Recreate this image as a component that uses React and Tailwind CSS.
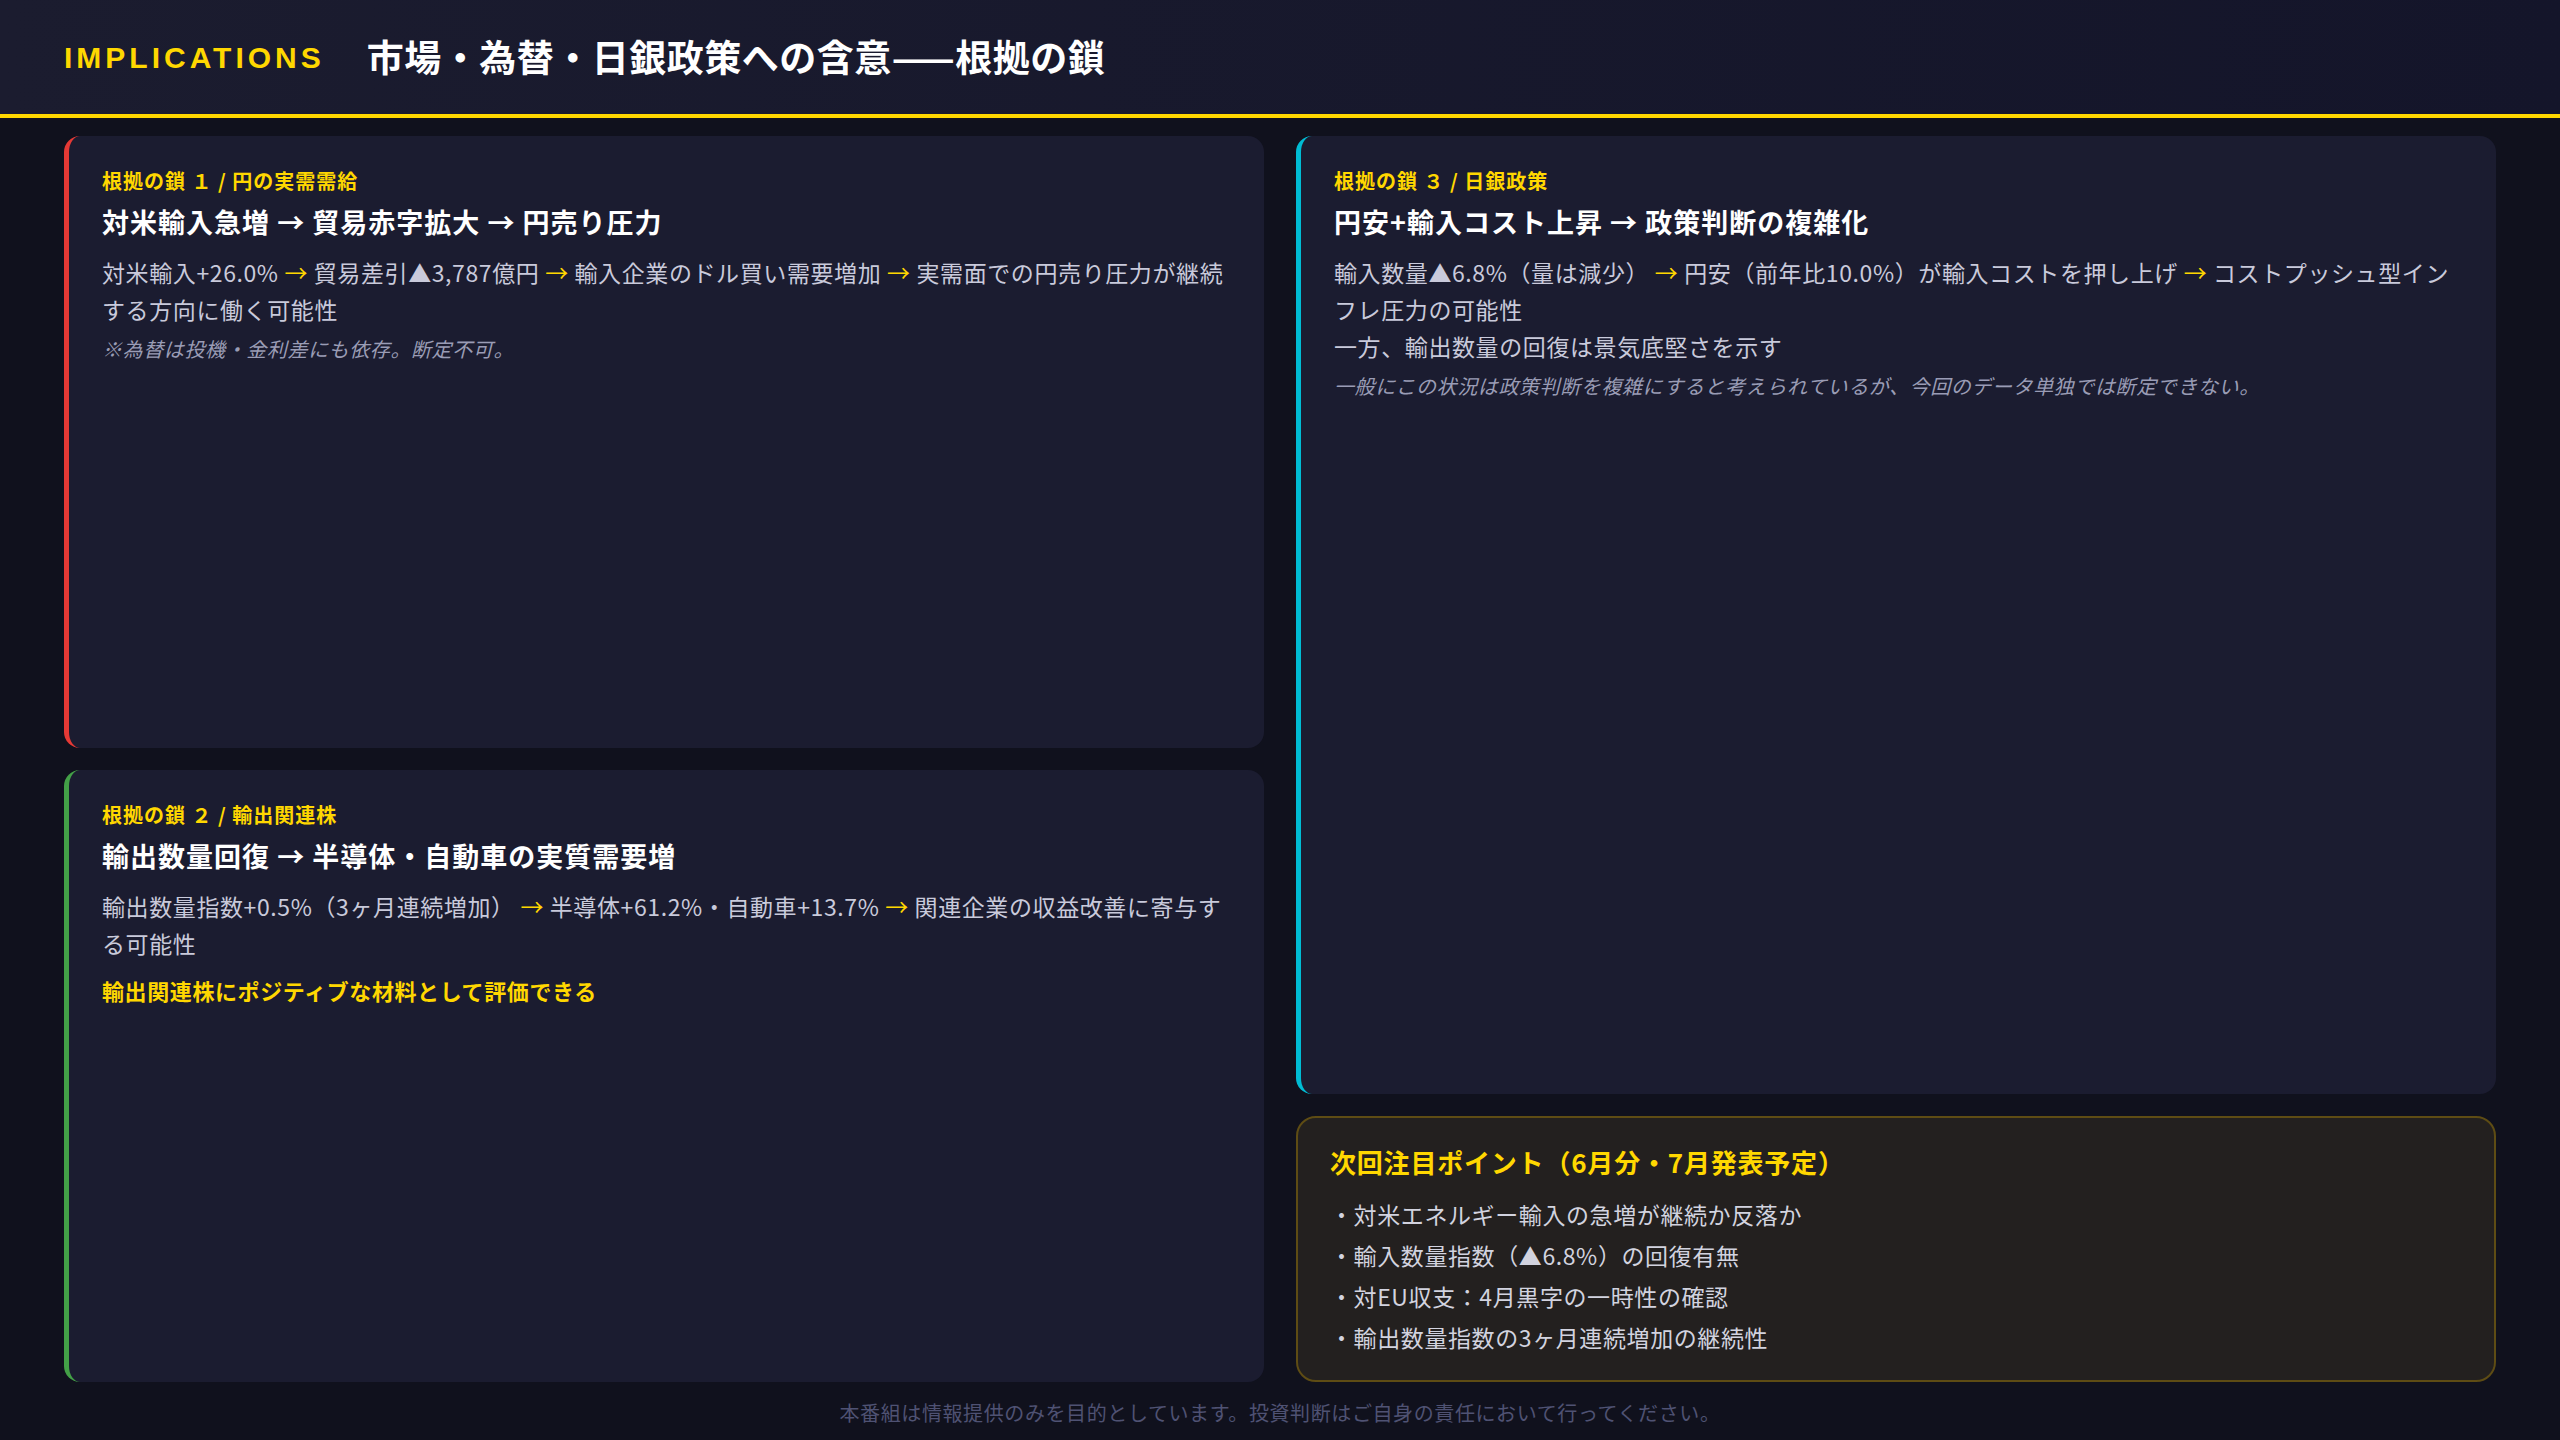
const font = { fontFamily: '"Noto Sans CJK JP", "Noto Sans", sans-serif' };

function Arrow() {
  return <span className="text-[#ffd700]"> → </span>;
}

function ChainCard({ accent, label, title, children, className = "" }) {
  return (
    <div className={`bg-[#1b1c30] rounded-2xl border-l-[5px] ${accent} pl-[33px] pr-8 pt-[28px] ${className}`}>
      <div className="text-[20px] font-bold text-[#ffd700] leading-[34px] tracking-[1px]">{label}</div>
      <div className="text-[27px] font-bold text-white leading-[40px] mt-[4px] tracking-[1px]">{title}</div>
      <div className="mt-[12px] text-[23px] leading-[37px] text-[#c9cadb] tracking-[0.6px]">{children}</div>
    </div>
  );
}

function Note({ children }) {
  return <div className="text-[20px] italic text-[#9a9cb5] leading-[34px] mt-[4px] tracking-[0.6px]">{children}</div>;
}

export default function App() {
  return (
    <div style={font} className="w-[2560px] h-[1440px] bg-[#10111d] flex flex-col overflow-hidden">
      {/* Header */}
      <div className="h-[118px] bg-gradient-to-r from-[#1b1c2f] to-[#14152a] border-b-4 border-[#ffd700] flex items-center pl-16 gap-[42px] shrink-0">
        <div className="text-[30px] font-bold tracking-[4px] text-[#ffd700]" style={{ fontFamily: '"Liberation Sans", sans-serif' }}>IMPLICATIONS</div>
        <div className="text-[37px] font-bold text-white tracking-[0.5px]">市場・為替・日銀政策への含意——根拠の鎖</div>
      </div>

      {/* Body */}
      <div className="flex-1 grid grid-cols-2 gap-8 px-16 pt-[18px] min-h-0">
        <div className="flex flex-col gap-[22px]">
          <ChainCard accent="border-[#e53935]" label="根拠の鎖 １ / 円の実需需給" title="対米輸入急増 → 貿易赤字拡大 → 円売り圧力" className="h-[612px]">
            <div>対米輸入+26.0%<Arrow />貿易差引▲3,787億円<Arrow />輸入企業のドル買い需要増加<Arrow />実需面での円売り圧力が継続する方向に働く可能性</div>
            <Note>※為替は投機・金利差にも依存。断定不可。</Note>
          </ChainCard>
          <ChainCard accent="border-[#43a047]" label="根拠の鎖 ２ / 輸出関連株" title="輸出数量回復 → 半導体・自動車の実質需要増" className="h-[612px]">
            <div>輸出数量指数+0.5%（3ヶ月連続増加）<Arrow />半導体+61.2%・自動車+13.7%<Arrow />関連企業の収益改善に寄与する可能性</div>
            <div className="text-[22px] font-bold text-[#ffd700] mt-[10px] tracking-[0.6px]">輸出関連株にポジティブな材料として評価できる</div>
          </ChainCard>
        </div>
        <div className="flex flex-col gap-[22px]">
          <ChainCard accent="border-[#00bcd4]" label="根拠の鎖 ３ / 日銀政策" title="円安+輸入コスト上昇 → 政策判断の複雑化" className="h-[958px]">
            <div>輸入数量▲6.8%（量は減少）<Arrow />円安（前年比10.0%）が輸入コストを押し上げ<Arrow />コストプッシュ型インフレ圧力の可能性</div>
            <div>一方、輸出数量の回復は景気底堅さを示す</div>
            <Note>一般にこの状況は政策判断を複雑にすると考えられているが、今回のデータ単独では断定できない。</Note>
          </ChainCard>
          <div className="h-[266px] bg-[#23201f] border-2 border-[#5e4c14] rounded-[20px] px-8 pt-[24px]">
            <div className="text-[26px] font-bold text-[#ffd700] leading-[40px] tracking-[0.8px]">次回注目ポイント（6月分・7月発表予定）</div>
            <ul className="mt-[12px] text-[23px] text-[#d2d3df] leading-[41px] tracking-[0.6px]">
              <li>・対米エネルギー輸入の急増が継続か反落か</li>
              <li>・輸入数量指数（▲6.8%）の回復有無</li>
              <li>・対EU収支：4月黒字の一時性の確認</li>
              <li>・輸出数量指数の3ヶ月連続増加の継続性</li>
            </ul>
          </div>
        </div>
      </div>

      {/* Footer */}
      <div className="h-[54px] flex items-center justify-center text-[20px] text-[#4f5273] tracking-[0.6px] shrink-0">
        本番組は情報提供のみを目的としています。投資判断はご自身の責任において行ってください。
      </div>
    </div>
  );
}
